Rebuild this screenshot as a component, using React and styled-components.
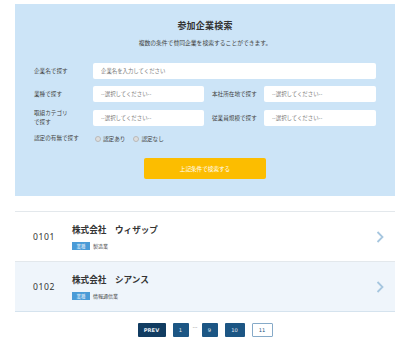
import styled, { createGlobalStyle } from 'styled-components'

const GlobalStyle = createGlobalStyle`
    body {
        margin: 0;
        background: #fff;
        font-family: "Noto Sans CJK JP", "Noto Sans", sans-serif;
        color: #333;
    }
    * { box-sizing: border-box; }
`

const Page = styled.div`
    width: 410px;
    padding: 4px 15px 0;
`

const SearchPanel = styled.section`
    background: #cce4f7;
    height: 192px;
    padding: 16px 19px 0;
    display: flex;
    flex-direction: column;
    align-items: center;
`

const Title = styled.h2`
    margin: 0;
    font-size: 9px;
    line-height: 12px;
    font-weight: 700;
    letter-spacing: .2px;
    color: #333;
`

const Lead = styled.p`
    margin: 7px 0 0;
    font-size: 5.8px;
    line-height: 8px;
    color: #444;
`

const Form = styled.div`
    margin-top: 16px;
    width: 100%;
    display: grid;
    grid-template-columns: 59px 111px 60px 112px;
    align-items: center;
    row-gap: 7px;
`

const Label = styled.label`
    font-size: 5.6px;
    line-height: 9px;
    color: #444;
    padding-left: ${p => p.$indent ? '8px' : '0'};
`

const Field = styled.div`
    grid-column: ${p => p.$span ? 'span 3' : 'auto'};
    height: 16px;
    background: #fff;
    border-radius: 2px;
    padding-left: 8px;
    display: flex;
    align-items: center;
    font-size: 5.4px;
    color: #777;
`

const Radios = styled.div`
    grid-column: span 3;
    display: flex;
    gap: 8px;
    padding-left: 2px;
    margin-top: 1px;
`

const Radio = styled.span`
    display: flex;
    align-items: center;
    gap: 2px;
    font-size: 5.6px;
    color: #444;

    &::before {
        content: '';
        inline-size: 4px;
        aspect-ratio: 1/1;
        border-radius: 50%;
        background: #ddd;
        border: .5px solid #b9b9b9;
    }
`

const SearchButton = styled.button`
    margin-top: 15px;
    width: 122px;
    height: 21px;
    border: none;
    border-radius: 2px;
    background: #fcbd00;
    color: #fff;
    font-family: inherit;
    font-size: 5.6px;
`

const List = styled.ul`
    list-style: none;
    margin: 15px 0 0;
    padding: 0;
    border-top: 1px solid #e3e8ec;
`

const Row = styled.li`
    height: 50px;
    display: flex;
    align-items: center;
    padding: 0 11px 0 18px;
    background: ${p => p.$alt ? '#eff5fb' : '#fff'};
    border-bottom: 1px solid ${p => p.$alt ? '#d5e3ee' : '#e3e8ec'};
`

const Num = styled.span`
    width: 39px;
    font-size: 8.6px;
    letter-spacing: .6px;
    color: #333;
    font-family: "Noto Sans", sans-serif;
`

const Info = styled.div`
    flex: 1;
    display: flex;
    flex-direction: column;
    gap: 7px;
`

const Name = styled.p`
    margin: 0;
    font-size: 8.6px;
    line-height: 11px;
    font-weight: 700;
    color: #333;
`

const Meta = styled.div`
    display: flex;
    align-items: center;
    gap: 3px;
    font-size: 5px;
    color: #444;
`

const Tag = styled.span`
    width: 18px;
    height: 8px;
    background: #4a9bd7;
    color: #e8f3fb;
    font-size: 4.4px;
    display: flex;
    align-items: center;
    justify-content: center;
`

const Chevron = () => (
    <svg width="8" height="12" viewBox="0 0 8 12">
        <path d="M1.5 1 L6.5 6 L1.5 11" fill="none" stroke="#a6c6df" strokeWidth="1.8" />
    </svg>
)

const Pager = styled.nav`
    margin-top: 11px;
    display: flex;
    justify-content: center;
    align-items: flex-start;
    gap: 7px;
`

const PageBtn = styled.span`
    min-width: ${p => p.$w}px;
    height: 14px;
    display: flex;
    align-items: center;
    justify-content: center;
    font-family: "DejaVu Sans", sans-serif;
    font-size: 5.2px;
    font-weight: ${p => p.$prev ? 700 : 400};
    color: ${p => p.$current ? '#1d4f7a' : '#e6eef5'};
    background: ${p => p.$current ? '#fff' : p.$prev ? '#113c61' : '#1c5684'};
    border: ${p => p.$current ? '1px solid #86aac8' : 'none'};
    border-radius: 1px;
`

const Dots = styled.span`
    width: 5px;
    margin: 1px -3px 0;
    font-size: 5px;
    color: #888;
    line-height: 6px;
`

const companies = [
    { no: '0101', name: '株式会社　ウィザップ', type: '製造業' },
    { no: '0102', name: '株式会社　シアンス', type: '情報通信業' },
]

export default function App() {
    return (
        <Page>
            <GlobalStyle />
            <SearchPanel>
                <Title>参加企業検索</Title>
                <Lead>複数の条件で賛同企業を検索することができます。</Lead>
                <Form>
                    <Label>企業名で探す</Label>
                    <Field $span>企業名を入力してください</Field>
                    <Label>業種で探す</Label>
                    <Field>--選択してください--</Field>
                    <Label $indent>本社所在地で探す</Label>
                    <Field>--選択してください--</Field>
                    <Label>取組カテゴリ<br />で探す</Label>
                    <Field>--選択してください--</Field>
                    <Label $indent>従業員規模で探す</Label>
                    <Field>--選択してください--</Field>
                    <Label>認定の有無で探す</Label>
                    <Radios>
                        <Radio>認定あり</Radio>
                        <Radio>認定なし</Radio>
                    </Radios>
                </Form>
                <SearchButton>上記条件で検索する</SearchButton>
            </SearchPanel>
            <List>
                {companies.map((c, i) => (
                    <Row key={c.no} $alt={i % 2 === 1}>
                        <Num>{c.no}</Num>
                        <Info>
                            <Name>{c.name}</Name>
                            <Meta><Tag>業種</Tag>{c.type}</Meta>
                        </Info>
                        <Chevron />
                    </Row>
                ))}
            </List>
            <Pager>
                <PageBtn $w={28} $prev>PREV</PageBtn>
                <PageBtn $w={16}>1</PageBtn>
                <Dots>…</Dots>
                <PageBtn $w={16}>9</PageBtn>
                <PageBtn $w={20}>10</PageBtn>
                <PageBtn $w={21} $current>11</PageBtn>
            </Pager>
        </Page>
    )
}
